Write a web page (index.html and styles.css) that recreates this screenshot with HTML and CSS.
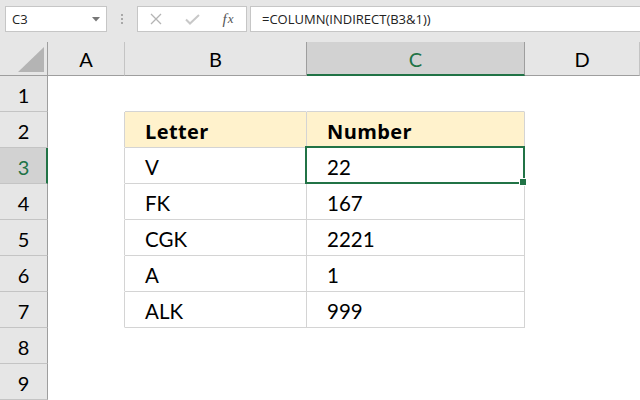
FILE: index.html
```html
<!DOCTYPE html>
<html>
<head>
<meta charset="utf-8">
<link rel="stylesheet" href="styles.css">
</head>
<body>
<div class="app">
  <div class="fbar">
    <div class="namebox">
      <span>C3</span>
      <svg class="dd" width="8" height="5" viewBox="0 0 8 5"><polygon points="0,0 8,0 4,4.5" fill="#777"/></svg>
    </div>
    <div class="grip"><i></i><i></i><i></i></div>
    <div class="fxbtns">
      <span class="slot"><svg width="12" height="12" viewBox="0 0 12 12"><path d="M1 1 L11 11 M11 1 L1 11" stroke="#b4b4b4" stroke-width="1.3" fill="none"/></svg></span>
      <span class="slot"><svg width="15" height="11" viewBox="0 0 15 11"><path d="M1 5.5 L5 9.5 L14 1" stroke="#c8c8c8" stroke-width="2" fill="none"/></svg></span>
      <span class="slot fx"><i>f</i><i class="x">x</i></span>
    </div>
    <div class="formula">=COLUMN(INDIRECT(B3&amp;1))</div>
  </div>
  <div class="sheet">
    <div class="corner"><svg width="47" height="33" viewBox="0 0 47 33"><polygon points="44,5 44,30 18,30" fill="#b4b4b4"/></svg></div>
    <div class="ch">A</div>
    <div class="ch ch-b">B</div>
    <div class="ch sel">C</div>
    <div class="ch">D</div>

    <div class="rh">1</div>
    <div class="c"></div>
    <div class="c tt"></div>
    <div class="c tt"></div>
    <div class="c"></div>

    <div class="rh">2</div>
    <div class="c tl"></div>
    <div class="c t hd">Letter</div>
    <div class="c t hd">Number</div>
    <div class="c"></div>

    <div class="rh sel">3</div>
    <div class="c tl"></div>
    <div class="c t">V</div>
    <div class="c t active">22<span class="handle"></span></div>
    <div class="c"></div>

    <div class="rh">4</div>
    <div class="c tl"></div>
    <div class="c t">FK</div>
    <div class="c t">167</div>
    <div class="c"></div>

    <div class="rh">5</div>
    <div class="c tl"></div>
    <div class="c t">CGK</div>
    <div class="c t">2221</div>
    <div class="c"></div>

    <div class="rh">6</div>
    <div class="c tl"></div>
    <div class="c t">A</div>
    <div class="c t">1</div>
    <div class="c"></div>

    <div class="rh">7</div>
    <div class="c tl"></div>
    <div class="c t">ALK</div>
    <div class="c t">999</div>
    <div class="c"></div>

    <div class="rh">8</div>
    <div class="c"></div>
    <div class="c"></div>
    <div class="c"></div>
    <div class="c"></div>

    <div class="rh">9</div>
    <div class="c"></div>
    <div class="c"></div>
    <div class="c"></div>
    <div class="c"></div>
  </div>
</div>
</body>
</html>
```
FILE: styles.css
```css
* { box-sizing: border-box; margin: 0; padding: 0; }
body {
  margin: 0;
  width: 640px;
  height: 400px;
  overflow: hidden;
  background: #e6e6e6;
  font-family: Lato, "Liberation Sans", sans-serif;
  color: #000;
}
.app { display: flex; flex-direction: column; }

.fbar {
  height: 42px;
  display: flex;
  align-items: flex-start;
  padding-top: 6px;
  background: #e6e6e6;
  font-family: "Open Sans", "Liberation Sans", sans-serif;
  font-size: 13px;
  color: #222;
}
.namebox {
  margin-left: 5px;
  width: 102px;
  height: 26px;
  background: #fff;
  border: 1px solid #c6c6c6;
  display: flex;
  align-items: center;
  justify-content: space-between;
  padding: 0 6px 0 6px;
}
.dd { margin-top: 1px; }
.grip {
  margin-left: 13px;
  width: 3px;
  height: 26px;
  display: flex;
  flex-direction: column;
  align-items: center;
  justify-content: center;
  gap: 2px;
}
.grip i { display: block; width: 2px; height: 2px; background: #a8a8a8; }
.fxbtns {
  margin-left: 14px;
  width: 110px;
  height: 26px;
  background: #fff;
  border: 1px solid #c6c6c6;
  display: flex;
  align-items: center;
  padding-left: 0;
}
.slot { width: 36px; display: flex; justify-content: center; align-items: center; }
.fx {
  font-family: "Liberation Serif", serif;
  font-size: 15px;
  color: #555;
}
.fx .x { font-size: 13px; margin-left: 1px; }
.formula {
  margin-left: 3px;
  flex: 1;
  height: 26px;
  background: #fff;
  border: 1px solid #c6c6c6;
  border-right: none;
  padding-left: 11px;
  display: flex;
  align-items: center;
}

.sheet {
  display: grid;
  grid-template-columns: 48px 77px 182px 218px 115px;
  grid-template-rows: 34px repeat(9, 36px);
  background: #fff;
  font-size: 20px;
}
.corner {
  background: #e6e6e6;
  border-right: 1px solid #9e9e9e;
  border-bottom: 1px solid #9e9e9e;
}
.corner svg { display: block; }
.ch {
  background: #e6e6e6;
  border-right: 1px solid #c4c4c4;
  border-bottom: 1px solid #9e9e9e;
  display: flex;
  align-items: center;
  justify-content: center;
  padding-top: 1px;
}
.ch-b { border-right-color: #9e9e9e; }
.ch.sel {
  background: #d2d2d2;
  color: #217346;
  border-bottom: 2px solid #217346;
  border-right-color: #9e9e9e;
}
.rh {
  background: #e6e6e6;
  border-right: 1px solid #9e9e9e;
  border-bottom: 1px solid #c4c4c4;
  display: flex;
  align-items: center;
  justify-content: center;
  padding-top: 2px;
}
.rh.sel {
  background: #d2d2d2;
  color: #217346;
  border-right: 2px solid #217346;
  padding-left: 1px;
}
.c {
  border-right: 1px solid transparent;
  border-bottom: 1px solid transparent;
  display: flex;
  align-items: flex-end;
  padding-left: 20px;
  padding-bottom: 4px;
  line-height: 24px;
  position: relative;
  font-size: 20.5px;
}
.t { border-color: #d4d4d4; }
.tl { border-right-color: #d4d4d4; }
.tt { border-bottom-color: #d4d4d4; }
.hd {
  background: #fff2cc;
  font-family: "Open Sans", Lato, sans-serif;
  font-weight: 700;
  font-size: 20px;
  letter-spacing: 0.4px;
  padding-bottom: 3px;
}
.active::after {
  content: "";
  position: absolute;
  top: -2px;
  left: -2px;
  right: -1px;
  bottom: -1px;
  border: 2px solid #217346;
  pointer-events: none;
}
.handle {
  position: absolute;
  right: -3px;
  bottom: -3px;
  width: 8px;
  height: 8px;
  background: #217346;
  border: 1px solid #fff;
  z-index: 2;
}
```
